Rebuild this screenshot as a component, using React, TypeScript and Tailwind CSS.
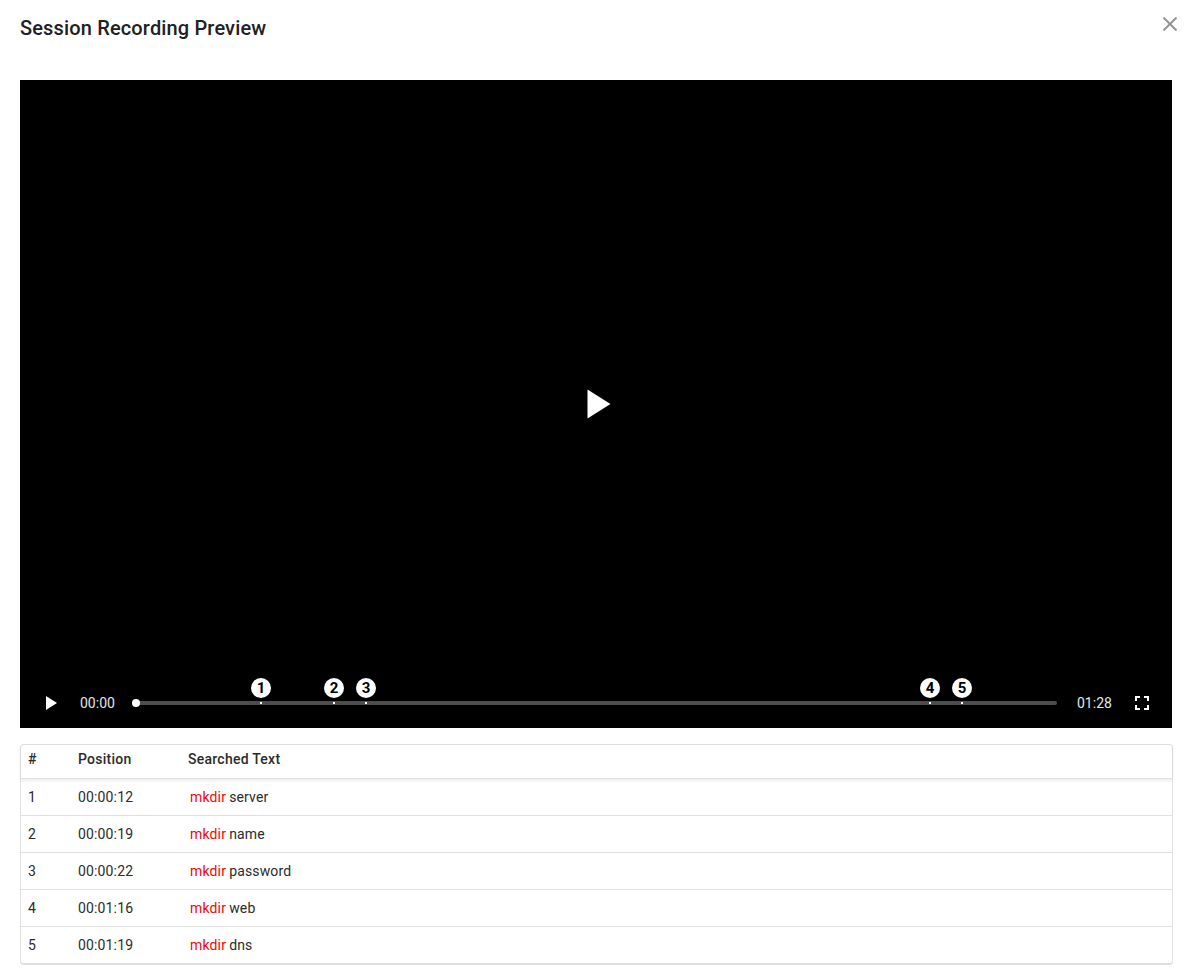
const rows = [
  { n: 1, pos: "00:00:12", text: "server" },
  { n: 2, pos: "00:00:19", text: "name" },
  { n: 3, pos: "00:00:22", text: "password" },
  { n: 4, pos: "00:01:16", text: "web" },
  { n: 5, pos: "00:01:19", text: "dns" },
];
const markers = [
  { n: 1, x: 125 },
  { n: 2, x: 198 },
  { n: 3, x: 230 },
  { n: 4, x: 794 },
  { n: 5, x: 826 },
];

export default function App() {
  return (
    <div className="w-[1189px] h-[977px] bg-white pl-5 pr-[17px] overflow-hidden font-['Roboto',sans-serif] text-[#212121]">
      <div className="h-20 flex justify-between items-start">
        <h1 className="text-xl leading-[56px] font-medium tracking-[0.15px]">Session Recording Preview</h1>
        <svg className="mt-[17px] -mr-[5px]" width="14" height="14" viewBox="0 0 14 14" fill="none" stroke="#949494" strokeWidth="2">
          <path d="M0.5 0.5L13.5 13.5M13.5 0.5L0.5 13.5" />
        </svg>
      </div>

      <div className="relative h-[648px] bg-black flex flex-col justify-end text-white">
        <svg className="absolute left-[567px] top-[309px]" width="24" height="30" viewBox="0 0 24 30" fill="white">
          <path d="M0.5 0.5L23.5 15L0.5 29.5Z" />
        </svg>
        <div className="h-[50px] flex items-center pb-[1px]">
          <svg className="ml-[26px] mr-px" width="11" height="14" viewBox="0 0 11 14" fill="white">
            <path d="M0 0L11 7L0 14Z" />
          </svg>
          <span className="ml-[22px] w-[36px] text-sm leading-5 text-[#e6e6e6]">00:00</span>
          <div className="relative ml-[20px] w-[921px] h-1 rounded-full bg-[#4d4d4d]">
            <div className="absolute -left-1 -top-0.5 w-2 h-2 rounded-full bg-white" />
            {markers.map((m) => (
              <div key={m.n}>
                <div className="absolute top-[1px] w-[2px] h-[2px] bg-white" style={{ left: m.x - 1 }} />
                <div
                  className="absolute -top-[23px] w-5 h-5 rounded-full bg-white text-black text-[15px] font-bold leading-5 text-center"
                  style={{ left: m.x - 10 }}
                >
                  {m.n}
                </div>
              </div>
            ))}
          </div>
          <span className="ml-5 w-[36px] text-sm leading-5 text-[#e6e6e6]">01:28</span>
          <svg className="ml-[22px]" width="14" height="14" viewBox="5 5 14 14" fill="white">
            <path d="M7 14H5v5h5v-2H7v-3zm-2-4h2V7h3V5H5v5zm12 7h-3v2h5v-5h-2v3zM14 5v2h3v3h2V5h-5z" />
          </svg>
        </div>
      </div>

      <div className="mt-4 -mr-px rounded border border-[#e0e0e0] border-b-2 text-sm tracking-[0.15px] text-[#2b2b2b]">
        <div className="flex h-[34px] pb-[5px] items-center font-medium tracking-[0.25px] border-b border-[#e0e0e0] shadow-[0_2px_4px_rgba(0,0,0,0.08)]">
          <div className="w-[58px] pl-[7px]">#</div>
          <div className="w-[110px] -ml-px mr-px">Position</div>
          <div className="-ml-px">Searched Text</div>
        </div>
        {rows.map((r, i) => (
          <div key={r.n} className={`flex items-center ${i < 4 ? "h-[37px] border-b border-[#e0e0e0]" : "h-9"}`}>
            <div className="w-[58px] pl-[7px]">{r.n}</div>
            <div className="w-[110px] -ml-px mr-px">{r.pos}</div>
            <div className="pl-px">
              <span className="text-[#ff0000] mr-[-0.5px]">mkdir</span> {r.text}
            </div>
          </div>
        ))}
      </div>
    </div>
  );
}
